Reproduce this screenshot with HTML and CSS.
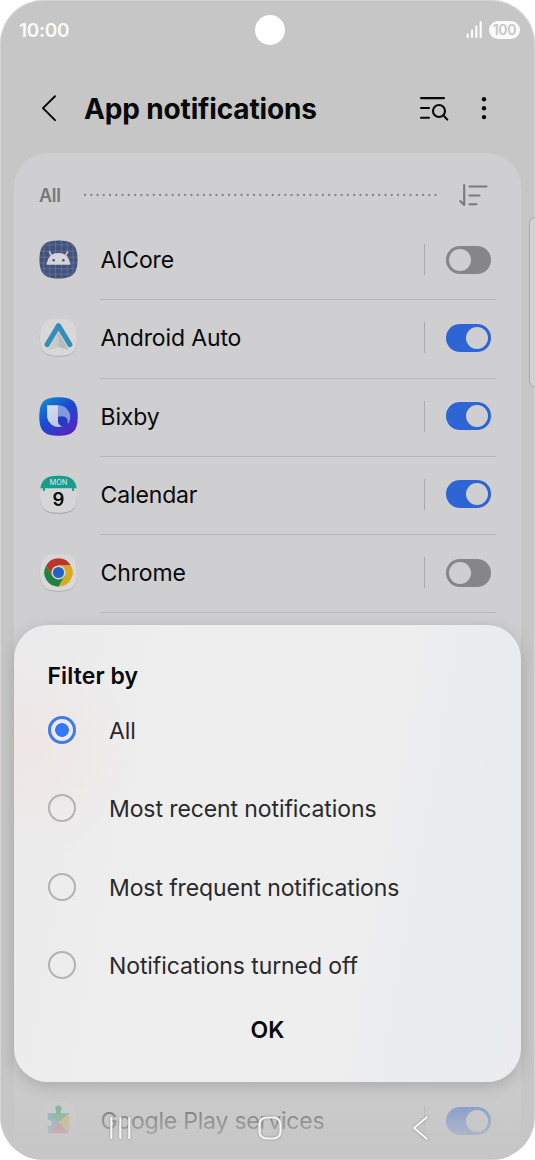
FILE: index.html
```html
<!DOCTYPE html>
<html lang="en">
<head>
<meta charset="utf-8">
<title>App notifications</title>
<link rel="stylesheet" href="styles.css">
</head>
<body>
<div class="phone">
  <header class="status">
    <span class="clock">10:00</span>
    <span class="camera"></span>
    <span class="indicators">
      <svg width="17" height="18" viewBox="0 0 17 18" stroke="#fbfbfb" stroke-width="2.2" stroke-linecap="round"><path d="M1.7 13.5v2.6M6 9.700v6.400M10.300 5.500v10.600M14.700 1.200v14.900"/></svg>
      <span class="battery">100</span>
    </span>
  </header>
  <div class="toolbar">
    <svg class="back" width="18" height="28" viewBox="0 0 18 28" fill="none" stroke="#080808" stroke-width="2" stroke-linecap="round" stroke-linejoin="round"><path d="M16 2.300 4 14.100l12 12"/></svg>
    <h1>App notifications</h1>
    <svg class="find" width="32" height="28" viewBox="0 0 32 28" fill="none" stroke="#080808" stroke-width="2.100" stroke-linecap="round"><path d="M3 4.100h23M3 14h8M3 23.700h8"/><circle cx="21" cy="17" r="6"/><path d="m25.300 21.300 4 4.300"/></svg>
    <svg class="more" width="8" height="28" viewBox="0 0 8 28" fill="#080808"><circle cx="4" cy="5.300" r="2.200"/><circle cx="4" cy="14.200" r="2.200"/><circle cx="4" cy="23.100" r="2.200"/></svg>
  </div>
  <main class="card">
    <div class="filter">
      <span>All</span>
      <svg class="dots" width="356" height="4" viewBox="0 0 356 4"><path d="M2 2h353" stroke="#858587" stroke-width="2.300" stroke-linecap="round" stroke-dasharray="0.010 6.250"/></svg>
      <svg width="30" height="26" viewBox="0 0 30 26" fill="none" stroke="#7a7a7c" stroke-width="2.100" stroke-linecap="round" stroke-linejoin="round"><path d="M6.200 3v20l-4-4M11.500 4.500h17M11.500 13.500h10M11.500 22.300h7"/></svg>
    </div>
    <div class="row">
      <svg class="app" viewBox="0 0 40 40"><path d="M20 .5C34 .5 39.500 5 39.500 20S34 39.500 20 39.500.500 35 .500 20 6 .500 20 .500Z" fill="#43527b"/><path d="M5 5v30M11 1v38M17 .5v39M23 .5v39M29 1v38M35 5v30M5 5h30M1 11.500h38M.5 17.500h39M.5 23.500h39M1 29.500h38M5 35h30" stroke="#8490b5" stroke-width=".7" opacity=".65"/><path d="M7.800 25.500C8.500 19 12 14.500 17 13.700q3-.7 6 0c5 .8 8.500 5.300 9.200 11.800Z" fill="#d4d5da"/><path d="m10.700 12.200 2.600 4.300M29.300 12.200l-2.600 4.300" stroke="#d4d5da" stroke-width="1.500" stroke-linecap="round"/><circle cx="15" cy="20.700" r="1.300" fill="#43527b"/><circle cx="25" cy="20.700" r="1.300" fill="#43527b"/></svg>
      <span class="name">AICore</span><i class="sep"></i><b class="switch off"></b>
    </div>
    <div class="row">
      <svg class="app" viewBox="0 0 40 40"><path d="M20 1.500C34 1.500 39.200 6 39.200 20.500S34 39.700 20 39.700.800 35 .800 20.500 6 1.500 20 1.500Z" fill="#b0b0b2"/><path d="M20 .8C34 .8 39 5.500 39 20S34 38.700 20 38.700 1 34.500 1 20 6 .800 20 .800Z" fill="#d8d8d9"/><path d="m20 14-10.500 19L20 29.500 30.500 33Z" fill="#b9babc"/><path d="M20 14v15.500L9.500 33Z" fill="#c9c9ca"/><path d="M8.300 27.300 20 7.800 31.700 27.300" fill="none" stroke="#358db9" stroke-width="5.200" stroke-linecap="round" stroke-linejoin="round"/></svg>
      <span class="name">Android Auto</span><i class="sep"></i><b class="switch"></b>
    </div>
    <div class="row">
      <svg class="app" viewBox="0 0 40 40"><defs><linearGradient id="bx" x1=".1" y1="0" x2=".85" y2="1"><stop stop-color="#168bd3"/><stop offset=".45" stop-color="#174bd0"/><stop offset="1" stop-color="#6020bf"/></linearGradient><linearGradient id="bw" x1="0" y1="0" x2="1" y2="1"><stop stop-color="#dce0ea"/><stop offset="1" stop-color="#b0bce0"/></linearGradient></defs><path d="M20 .3C34.500.300 39.700 5 39.700 20S34.500 39.700 20 39.700.300 35 .300 20 5.500.300 20 .300Z" fill="url(#bx)"/><path d="M8.300 8.500H20V20h12a12 12 0 0 1-23.700 1Z" fill="url(#bw)"/><path d="M20 8.500A12 12 0 0 1 32 21q0 4-2.500 7C30 22 26 19 20 19.500Z" fill="#8398df"/><path d="M19.500 20H25a5 5 0 1 1-5.500 5Z" fill="#253bc3"/></svg>
      <span class="name">Bixby</span><i class="sep"></i><b class="switch"></b>
    </div>
    <div class="row">
      <svg class="app" viewBox="0 0 40 40"><defs><clipPath id="cal"><path d="M20 .8C34 .8 39 5.500 39 20S34 38.700 20 38.700 1 34.500 1 20 6 .800 20 .800Z"/></clipPath></defs><path d="M20 1.600C34 1.600 39 6 39 20.700S34 39.700 20 39.700 1 35 1 20.700 6 1.600 20 1.600Z" fill="#a2a2a3"/><g clip-path="url(#cal)"><path fill="#d6d6d7" d="M0 0h40v40H0z"/><path fill="#169d8b" d="M0 0h40v13.500h-4v2.800h-2v-2.800H6v2.800H4v-2.800H0z"/></g><text x="20" y="10.200" class="month">MON</text><text x="20" y="32" class="date">9</text></svg>
      <span class="name">Calendar</span><i class="sep"></i><b class="switch"></b>
    </div>
    <div class="row">
      <svg class="app" viewBox="0 0 40 40"><path d="M20 1.500C34 1.500 39.200 6 39.200 20.500S34 39.700 20 39.700.800 35 .800 20.500 6 1.500 20 1.500Z" fill="#b0b0b2"/><path d="M20 .8C34 .8 39 5.500 39 20S34 38.700 20 38.700 1 34.500 1 20 6 .800 20 .800Z" fill="#d8d8d9"/><path d="M7.400 12.700A14.500 14.500 0 0 1 32.600 12.700H20L13.700 23.700Z" fill="#bd3428"/><path d="M32.600 12.700A14.500 14.500 0 0 1 20 34.500L26.300 23.700 20 12.700Z" fill="#d8aa20"/><path d="M20 34.500A14.500 14.500 0 0 1 7.400 12.700L13.700 23.700 26.300 23.700Z" fill="#238044"/><circle cx="20" cy="20" r="7.200" fill="#d8d8d9"/><circle cx="20" cy="20" r="5.700" fill="#1f62c1"/></svg>
      <span class="name">Chrome</span><i class="sep"></i><b class="switch off"></b>
    </div>
    <div class="row last">
      <svg class="app" viewBox="0 0 40 40"><path d="M20 .8C34 .8 39 5.500 39 20S34 38.500 20 38.500 1 34.500 1 20 6 .800 20 .800Z" fill="#d3d3d4"/><path d="M9 12.500h8.500V10a3.200 3.200 0 1 1 5 0v2.500H31L20 22Z" fill="#249e5c"/><path d="M31 12.500V33L20 22Z" fill="#c9ae3c"/><path d="M31 33H9l11-11Z" fill="#c94b48"/><path d="M9 33v-7.500a3.200 3.200 0 1 0 0-6v-7L20 22Z" fill="#438fbd"/></svg>
      <span class="name">Google Play services</span><i class="sep"></i><b class="switch"></b>
    </div>
  </main>
  <div class="edge"></div>
  <div class="fade"></div>
  <section class="dialog">
    <h2>Filter by</h2>
    <div class="option"><i class="radio checked"></i><span>All</span></div>
    <div class="option"><i class="radio"></i><span>Most recent notifications</span></div>
    <div class="option"><i class="radio"></i><span>Most frequent notifications</span></div>
    <div class="option"><i class="radio"></i><span>Notifications turned off</span></div>
    <div class="ok">OK</div>
  </section>
  <nav class="nav">
    <svg width="24" height="26" viewBox="0 0 24 26"><path d="M3.300 3v20M12.300 3v20M21.300 3v20"/></svg>
    <svg class="home" width="26" height="26" viewBox="0 0 26 26"><rect x="2.500" y="2.500" width="21" height="21" rx="7"/></svg>
    <svg width="18" height="26" viewBox="0 0 18 26"><path d="M15.500 2.500 3 13l12.500 10.500"/></svg>
  </nav>
</div>
</body>
</html>
```
FILE: styles.css
```css
* { box-sizing: border-box; }
body { margin: 0; background: #fff; font-family: Inter, "Liberation Sans", sans-serif; }
.phone { position: relative; width: 535px; height: 1160px; overflow: hidden; border-radius: 44px; background: #c6c6c6; box-shadow: inset 0 0 0 1px #d5d5d5; color: #080808; }
.status { height: 60px; padding: 0 15px 0 19px; display: grid; grid-template-columns: 1fr 30px 1fr; align-items: center; }
.clock { color: #fbfbfb; font-size: 19px; font-weight: 600; letter-spacing: -.3px; }
.camera { width: 30px; height: 30px; border-radius: 50%; background: #fff; }
.indicators { display: flex; justify-content: flex-end; align-items: center; gap: 6px; }
.battery { width: 31px; height: 18px; border-radius: 9px; background: #fbfbfb; color: #c6c6c6; font-size: 14px; line-height: 18px; font-weight: 600; text-align: center; letter-spacing: -.3px; }
.toolbar { height: 93px; padding: 3px 47px 0 39px; display: flex; align-items: center; }
h1 { margin: 0 auto 0 27px; font-size: 28px; font-weight: 700; letter-spacing: -.15px; white-space: nowrap; line-height: 34px; padding-top: 2px; }
.more { margin-left: 30px; }
.card { width: 507px; height: 1020px; margin-left: 14px; padding: 0 25px; border-radius: 34px 34px 0 0; background: #cfcfd1; }
.filter { height: 68px; padding: 16px 8px 0 0; display: flex; align-items: center; color: #777779; font-size: 18px; font-weight: 600; letter-spacing: -.3px; }
.filter .dots { margin-left: auto; margin-right: 19px; }
.row { height: 78.300px; padding: 0 5.300px 1.200px 0; display: flex; align-items: center; position: relative; }
.row::after { content: ""; position: absolute; left: 61px; right: 0; bottom: -1px; height: 1px; background: #b7b7b9; }
.app { width: 39px; height: 39px; flex: none; }
.name { margin-left: 22.500px; font-size: 23px; letter-spacing: -.13px; line-height: 30px; white-space: nowrap; padding-top: 1px; }
.sep { width: 1px; height: 31px; margin-left: auto; margin-right: 21px; background: #a9a9ab; }
.switch { width: 45px; height: 28px; padding: 3px; border-radius: 14px; background: #2e65d4; display: flex; justify-content: flex-end; }
.switch::after { content: ""; width: 22px; height: 22px; border-radius: 50%; background: #cfcfd2; }
.switch.off { background: #868688; justify-content: flex-start; }
.last { margin-top: 469.800px; }
.last .name { letter-spacing: -.22px; }
.month { font-size: 7.500px; font-weight: 500; text-anchor: middle; fill: #d4ded9; }
.date { font-size: 19px; font-weight: 600; text-anchor: middle; fill: #080808; }
.edge { position: absolute; left: 529px; top: 217px; width: 15px; height: 170px; border: 1.500px solid #a9a9aa; border-radius: 6px; background: #d2d2d2; }
.fade { position: absolute; left: 1px; right: 1px; top: 1070px; height: 89px; background: linear-gradient(rgba(198,198,198,.3), rgba(198,198,198,.88) 78%, #c6c6c6); }
.dialog { position: absolute; left: 14px; top: 625px; width: 507px; height: 457px; padding: 34px 33.500px 0; border-radius: 34px; background: radial-gradient(circle at 3% 27%, rgba(241,225,221,.5), transparent 110px), linear-gradient(100deg, #ebebed 0, #eeeeee 30%, #eeeeee 65%, #e9ebef 88%, #ececf0); box-shadow: 0 4px 16px rgba(0,0,0,.17); }
h2 { margin: 0; height: 32px; font-size: 23px; line-height: 35px; font-weight: 600; letter-spacing: .1px; }
.option { height: 78.300px; display: flex; align-items: center; gap: 33.500px; font-size: 23px; letter-spacing: -.1px; color: #29292b; white-space: nowrap; }
.option span { padding-top: 2px; }
.radio { width: 28px; height: 28px; border: 2px solid #b2b2b4; border-radius: 50%; }
.radio.checked { border: 3px solid #407bea; background: radial-gradient(circle, #3478fb 6.500px, transparent 7.200px); }
.ok { text-align: center; font-size: 23px; font-weight: 600; line-height: 32px; margin-top: 10px; }
.nav { position: absolute; left: 108px; top: 1115px; width: 321px; display: flex; justify-content: space-between; }
.nav svg { fill: none; stroke: #f5f5f5; stroke-width: 2.200; stroke-linecap: round; stroke-linejoin: round; filter: drop-shadow(0 0 1px rgba(80,80,80,.5)); overflow: visible; }
.nav .home { margin-right: 3px; }
```
